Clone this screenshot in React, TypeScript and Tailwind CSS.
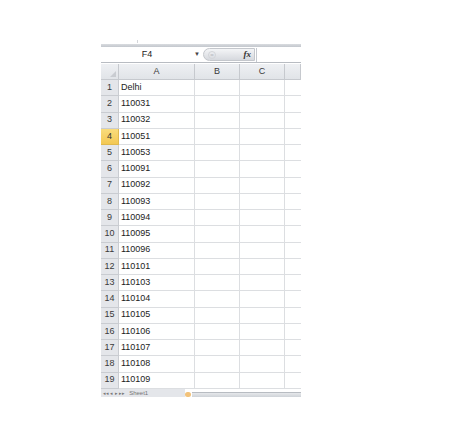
const rows = [
  'Delhi',
  '110031',
  '110032',
  '110051',
  '110053',
  '110091',
  '110092',
  '110093',
  '110094',
  '110095',
  '110096',
  '110101',
  '110103',
  '110104',
  '110105',
  '110106',
  '110107',
  '110108',
  '110109',
];

const cols = ['A', 'B', 'C', ''];

export default function App() {
  return (
    <div className="min-h-[437px] w-[474px] bg-white pl-[101px] pt-[43px] font-['Liberation_Sans',sans-serif] text-[9px] text-[#1c1c1c]">
      <div className="w-[200px]">
        {/* ribbon edge */}
        <div className="relative h-[1px]">
          <div className="absolute -top-[3px] left-[36px] h-[3px] w-[1px] bg-[#d4d6da]" />
        </div>
        <div className="h-[3px] bg-gradient-to-b from-[#d9dce0] to-[#c3c7cd]" />

        {/* name box + formula bar */}
        <div className="flex h-[16px] items-center border-b border-[#b8bcc2] bg-white">
          <div className="flex h-full w-[92px] items-center justify-center">F4</div>
          <div className="flex w-[8px] items-center justify-center text-[6px] text-[#444]">▼</div>
          <div className="ml-[2px] flex h-[13px] w-[52px] items-center justify-between rounded-l-full border border-[#c4c7cc] bg-gradient-to-b from-[#f4f5f7] to-[#d6d9de] pl-[4px] pr-[3px]">
            <span className="flex h-[8px] w-[8px] items-center justify-center rounded-full border border-[#d3d5d9] text-[6px] leading-none text-[#b5b8bd]">
              =
            </span>
            <span className="font-['Liberation_Serif',serif] text-[9px] font-bold italic leading-none text-[#333]">
              fx
            </span>
          </div>
          <div className="ml-[1px] h-[14px] flex-1 border-l border-[#c5c9cf] bg-white" />
        </div>

        {/* sheet grid */}
        <div className="mt-[1px] grid grid-cols-[18px_76px_45px_45px_16px]">
          {/* header row */}
          <div className="relative h-[16px] border-r border-b border-[#c6c9ce] bg-gradient-to-b from-[#eef0f3] to-[#e1e4e8]">
            <svg className="absolute bottom-[2px] right-[2px]" width="6" height="6" viewBox="0 0 6 6">
              <path d="M6 0 L6 6 L0 6 Z" fill="#c9ccd1" />
            </svg>
          </div>
          {cols.map((c, i) => (
            <div
              key={i}
              className="flex h-[16px] items-center justify-center border-r border-b border-[#c6c9ce] bg-gradient-to-b from-[#eef0f3] to-[#e1e4e8] text-[#3a3a3a]"
            >
              {c}
            </div>
          ))}

          {/* data rows */}
          {rows.map((v, r) => {
            const active = r === 3;
            return [
              <div
                key={`h${r}`}
                className={
                  active
                    ? 'flex h-[16.25px] items-center justify-center border-r border-b border-[#e0b94e] bg-gradient-to-b from-[#f9dc7c] to-[#f3c853] text-[#333]'
                    : 'flex h-[16.25px] items-center justify-center border-r border-b border-[#c9ccd1] bg-[#e4e6ea] text-[#3a3a3a]'
                }
              >
                {r + 1}
              </div>,
              <div
                key={`a${r}`}
                className="flex h-[16.25px] items-center border-r border-b border-[#dcdee1] pl-[2px]"
              >
                {v}
              </div>,
              <div key={`b${r}`} className="h-[16.25px] border-r border-b border-[#dcdee1]" />,
              <div key={`c${r}`} className="h-[16.25px] border-r border-b border-[#dcdee1]" />,
              <div key={`d${r}`} className="h-[16.25px] border-b border-[#dcdee1]" />,
            ];
          })}
        </div>

        {/* sheet tabs strip */}
        <div className="flex h-[8px] items-start">
          <div className="flex h-full w-[84px] items-center gap-[4px] bg-[#e4e6ea] pl-[2px] text-[5px] leading-[8px] text-[#777]">
            <span>◂◂ ◂ ▸ ▸▸</span>
            <span className="text-[6px]">Sheet1</span>
          </div>
          <div className="mt-[3px] h-[5px] w-[6px] rounded-sm bg-[#f2c27a]" />
          <div className="ml-[1px] mt-[3px] h-[5px] flex-1 border-t border-[#b8bcc2] bg-gradient-to-b from-[#e6e8eb] to-[#cfd3d8]" />
        </div>
      </div>
    </div>
  );
}
